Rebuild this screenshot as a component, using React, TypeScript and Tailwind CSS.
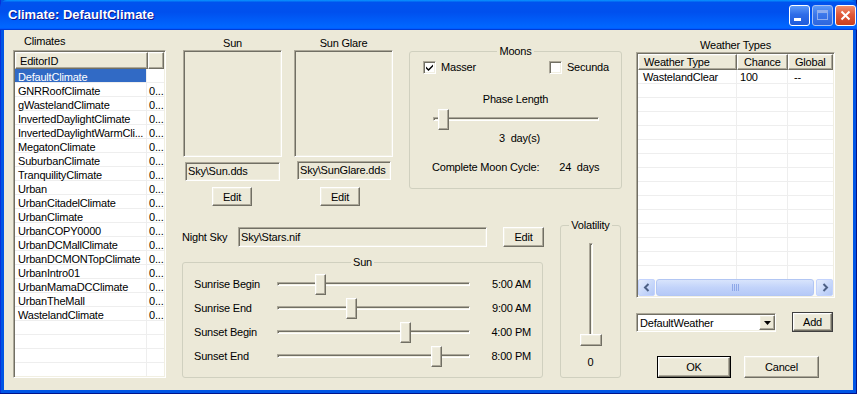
import React from "react";

const SUNKEN =
  "border border-t-[#ACA899] border-l-[#ACA899] border-r-white border-b-white shadow-[inset_1px_1px_0_#716F64,inset_-1px_-1px_0_#F1EFE2]";
const RAISED =
  "border border-t-white border-l-white border-r-[#716F64] border-b-[#716F64] shadow-[inset_-1px_-1px_0_#ACA899,inset_1px_1px_0_#F1EFE2]";

function Btn({ label, className }: { label: string; className: string }) {
  return (
    <div className={`${RAISED} bg-[#ECE9D8] flex items-center justify-center leading-[13px] ${className}`}>
      {label}
    </div>
  );
}

function DefBtn({ label, className }: { label: string; className: string }) {
  return (
    <div className={`border border-black flex ${className}`}>
      <div className={`${RAISED} bg-[#ECE9D8] flex-1 flex items-center justify-center leading-[13px]`}>{label}</div>
    </div>
  );
}

function Group({ title, className, children }: { title: string; className: string; children?: React.ReactNode }) {
  return (
    <div className={`relative border border-[#D0D0BF] rounded-[3px] ${className}`}>
      <div className="absolute -top-[7px] left-0 right-0 flex justify-center">
        <span className="bg-[#ECE9D8] px-[2px] leading-[13px]">{title}</span>
      </div>
      {children}
    </div>
  );
}

function HSlider({ className, thumb }: { className: string; thumb: number }) {
  return (
    <div className={`relative h-[21px] ${className}`}>
      <div className={`absolute left-0 right-0 top-[8px] h-[4px] bg-[#ECE9D8] ${SUNKEN}`} />
      <div className={`absolute top-0 w-[11px] h-[21px] bg-[#ECE9D8] ${RAISED}`} style={{ left: thumb }} />
    </div>
  );
}

function Check({ checked }: { checked: boolean }) {
  return (
    <div className={`w-[13px] h-[13px] bg-white ${SUNKEN} flex items-center justify-center`}>
      {checked && (
        <svg width="9" height="9" viewBox="0 0 9 9">
          <path d="M1 3.5 L3.5 6 L8 1.5 L8 3.5 L3.5 8 L1 5.5 Z" fill="#000" />
        </svg>
      )}
    </div>
  );
}

const climates: [string, string][] = [
  ["DefaultClimate", ""],
  ["GNRRoofClimate", "0..."],
  ["gWastelandClimate", "0..."],
  ["InvertedDaylightClimate", "0..."],
  ["InvertedDaylightWarmCli...", "0..."],
  ["MegatonClimate", "0..."],
  ["SuburbanClimate", "0..."],
  ["TranquilityClimate", "0..."],
  ["Urban", "0..."],
  ["UrbanCitadelClimate", "0..."],
  ["UrbanClimate", "0..."],
  ["UrbanCOPY0000", "0..."],
  ["UrbanDCMallClimate", "0..."],
  ["UrbanDCMONTopClimate", "0..."],
  ["UrbanIntro01", "0..."],
  ["UrbanMamaDCClimate", "0..."],
  ["UrbanTheMall", "0..."],
  ["WastelandClimate", "0..."],
];

function ClimatesColumn() {
  const rows = [...climates];
  while (rows.length < 23) rows.push(["", ""]);
  return (
    <div className="w-[153px] flex flex-col pt-[5px]">
      <div className="leading-[13px] pl-[11px]">Climates</div>
      <div className={`mt-[2px] h-[328px] bg-white p-px ${SUNKEN} flex flex-col overflow-hidden`}>
        <div className="flex h-[17px] shrink-0">
          <div className={`w-[133px] ${RAISED} bg-[#ECE9D8] pl-[4px] leading-[16px]`}>EditorID</div>
          <div className={`flex-1 ${RAISED} bg-[#ECE9D8]`} />
        </div>
        <div className="flex flex-col overflow-hidden">
          {rows.map(([name, v], i) => (
            <div key={i} className="flex h-[14px] shrink-0 border-b border-[#EEEEEE]">
              <div
                className={`w-[132px] pl-[3px] leading-[16px] whitespace-nowrap overflow-x-clip border-r border-[#EEEEEE] ${
                  i === 0 ? "bg-[#316AC5] text-white" : ""
                }`}
              >
                {name}
              </div>
              <div className="flex-1 pl-[2px] leading-[16px] whitespace-nowrap overflow-x-clip">{v}</div>
            </div>
          ))}
        </div>
      </div>
    </div>
  );
}

function ImageCol({ title, field, fieldClass, editClass }: { title: string; field: string; fieldClass: string; editClass: string }) {
  return (
    <div className="w-[99px] flex flex-col pt-[7px]">
      <div className="leading-[13px] text-center">{title}</div>
      <div className={`h-[107px] ${SUNKEN} bg-[#ECE9D8]`} />
      <div className={`h-[19px] ${SUNKEN} bg-[#ECE9D8] pl-[2px] leading-[17px] whitespace-nowrap ${fieldClass}`}>{field}</div>
      <Btn label="Edit" className={`w-[40px] h-[19px] pt-[1px] ${editClass}`} />
    </div>
  );
}

function Moons() {
  return (
    <Group title="Moons" className="w-[213px] h-[138px] mt-[21px] ml-[16px]">
      <div className="flex flex-col">
        <div className="flex items-center mt-[9px] pl-[13px] h-[13px]">
          <Check checked />
          <span className="ml-[5px] leading-[13px]">Masser</span>
          <div className="ml-[73px]">
            <Check checked={false} />
          </div>
          <span className="ml-[5px] leading-[13px]">Secunda</span>
        </div>
        <div className="mt-[19px] leading-[13px] text-center">Phase Length</div>
        <HSlider className="w-[166px] ml-[23px] mt-[3px]" thumb={5} />
        <div className="mt-[2px] leading-[13px] text-center pl-[8px]">3&nbsp; day(s)</div>
        <div className="mt-[16px] flex leading-[13px] pl-[22px]">
          <span>Complete Moon Cycle:</span>
          <span className="ml-[20px]">24&nbsp; days</span>
        </div>
      </div>
    </Group>
  );
}

const sunRows: [string, number, string][] = [
  ["Sunrise Begin", 38, "5:00 AM"],
  ["Sunrise End", 69, "9:00 AM"],
  ["Sunset Begin", 123, "4:00 PM"],
  ["Sunset End", 154, "8:00 PM"],
];

function SunGroup() {
  return (
    <Group title="Sun" className="w-[361px] h-[116px] mt-[15px]">
      <div className="flex flex-col pt-[9px] pl-[11px]">
        {sunRows.map(([label, t, val]) => (
          <div key={label} className="flex items-center h-[24px]">
            <div className="w-[83px] leading-[13px]">{label}</div>
            <HSlider className="w-[193px]" thumb={t} />
            <div className="w-[61px] text-right leading-[13px]">{val}</div>
          </div>
        ))}
      </div>
    </Group>
  );
}

function Volatility() {
  return (
    <Group title="Volatility" className="w-[61px] h-[153px] mt-[15px] ml-[16px]">
      <div className="flex flex-col items-center pt-[17px]">
        <div className="relative w-[22px] h-[103px]">
          <div className={`absolute left-[9px] top-0 w-[4px] h-[94px] bg-[#ECE9D8] ${SUNKEN}`} />
          <div className={`absolute left-0 top-[91px] w-[22px] h-[12px] bg-[#ECE9D8] ${RAISED}`} />
        </div>
        <div className="mt-[10px] leading-[13px]">0</div>
      </div>
    </Group>
  );
}

function MiddleColumn() {
  return (
    <div className="w-[440px] ml-[16px] flex flex-col">
      <div className="flex h-[180px] items-start">
        <div className="ml-[1px]">
          <ImageCol title="Sun" field="Sky\Sun.dds" fieldClass="mt-[5px] ml-[2px] w-[95px]" editClass="mt-[6px] ml-[29px]" />
        </div>
        <div className="ml-[12px]">
          <ImageCol title="Sun Glare" field="Sky\SunGlare.dds" fieldClass="mt-[4px] ml-[3px] w-[94px]" editClass="mt-[7px] ml-[26px]" />
        </div>
        <Moons />
      </div>
      <div className="flex items-start">
        <div className="w-[362px] flex flex-col">
          <div className="flex items-center mt-[17px] h-[20px]">
            <div className="w-[56px] leading-[13px] pt-[1px]">Night Sky</div>
            <div className={`w-[249px] h-[20px] ${SUNKEN} bg-[#ECE9D8] pl-[2px] leading-[18px]`}>Sky\Stars.nif</div>
            <Btn label="Edit" className="ml-[16px] w-[41px] h-[20px] pt-[1px]" />
          </div>
          <SunGroup />
        </div>
        <Volatility />
      </div>
    </div>
  );
}

function Chevron({ dir }: { dir: "l" | "r" }) {
  return (
    <svg width="8" height="9" viewBox="0 0 8 9">
      <path
        d={dir === "l" ? "M5.5 1 L2 4.5 L5.5 8" : "M2.5 1 L6 4.5 L2.5 8"}
        stroke="#4D6185"
        strokeWidth="2"
        fill="none"
      />
    </svg>
  );
}

function ScrollBtn({ dir }: { dir: "l" | "r" }) {
  return (
    <div className="w-[17px] h-[17px] rounded-[2px] border border-[#C3D3FD] bg-[linear-gradient(135deg,#E6EEFC,#C5D6FA_60%,#B4C8F6)] flex items-center justify-center">
      <Chevron dir={dir} />
    </div>
  );
}

function WeatherColumn() {
  const rows = Array.from({ length: 15 });
  return (
    <div className="w-[199px] ml-[14px] flex flex-col pt-[9px]">
      <div className="leading-[13px] text-center">Weather Types</div>
      <div className={`h-[246px] bg-white p-px ${SUNKEN} flex flex-col overflow-hidden`}>
        <div className="flex h-[16px] shrink-0 leading-[14px]">
          <div className={`w-[99px] ${RAISED} bg-[#ECE9D8] pl-[5px]`}>Weather Type</div>
          <div className={`w-[51px] ${RAISED} bg-[#ECE9D8] pl-[6px]`}>Chance</div>
          <div className={`flex-1 ${RAISED} bg-[#ECE9D8] pl-[6px]`}>Global</div>
        </div>
        <div className="flex-1 flex flex-col overflow-hidden">
          {rows.map((_, i) => (
            <div key={i} className="flex h-[14px] shrink-0 border-b border-[#EEEEEE] leading-[15px]">
              <div className="w-[99px] pl-[5px] border-r border-[#EEEEEE]">{i === 0 ? "WastelandClear" : ""}</div>
              <div className="w-[51px] pl-[3px] border-r border-[#EEEEEE]">{i === 0 ? "100" : ""}</div>
              <div className="flex-1 pl-[6px]">{i === 0 ? "--" : ""}</div>
            </div>
          ))}
        </div>
        <div className="h-[17px] shrink-0 flex bg-[#FBFBF8]">
          <ScrollBtn dir="l" />
          <div className="flex-1 flex px-[1px]">
            <div className="w-[158px] h-[17px] rounded-[3px] border border-[#B2C6F3] bg-[linear-gradient(180deg,#D8E4FC,#C2D3FA_50%,#B5C9F7)] flex items-center justify-center gap-[1px]">
              <div className="w-[1px] h-[7px] bg-[#8EA8E8]" />
              <div className="w-[1px] h-[7px] bg-[#8EA8E8]" />
              <div className="w-[1px] h-[7px] bg-[#8EA8E8]" />
              <div className="w-[1px] h-[7px] bg-[#8EA8E8]" />
            </div>
          </div>
          <ScrollBtn dir="r" />
        </div>
      </div>
      <div className="flex items-start mt-[15px]">
        <div className={`w-[140px] h-[19px] bg-white ${SUNKEN} flex items-center pl-[3px]`}>
          <span className="flex-1 leading-[13px] pt-[1px]">DefaultWeather</span>
          <div className={`w-[16px] h-[15px] ${RAISED} bg-[#ECE9D8] flex items-center justify-center`}>
            <svg width="7" height="4" viewBox="0 0 7 4">
              <path d="M0 0 H7 L3.5 4 Z" fill="#000" />
            </svg>
          </div>
        </div>
        <div className="ml-[16px] -mt-[1px] w-[41px] h-[20px] border border-[#404040] flex">
          <div className={`${RAISED} bg-[#ECE9D8] flex-1 flex items-center justify-center leading-[13px]`}>Add</div>
        </div>
      </div>
      <div className="flex mt-[24px] ml-[21px]">
        <DefBtn label="OK" className="w-[74px] h-[22px]" />
        <Btn label="Cancel" className="ml-[13px] w-[75px] h-[22px]" />
      </div>
    </div>
  );
}

function TitleBar() {
  return (
    <div className="h-[30px] flex items-center pl-[8px] pr-[1px] rounded-t-[7px] bg-[linear-gradient(180deg,#0997FF_0%,#0053EE_8%,#0050EE_40%,#0066FF_88%,#0066FF_93%,#005BFF_95%,#003DD7_96%,#003DD7_100%)]">
      <span className="text-white font-bold text-[13px] leading-[16px] tracking-normal [text-shadow:1px_1px_#0F1089]">
        Climate: DefaultClimate
      </span>
      <div className="ml-auto flex gap-[2px]">
        <div className="w-[21px] h-[21px] rounded-[3px] border border-white bg-[linear-gradient(180deg,#5C9AF8,#2E6CE8_45%,#1F5BDB)] relative">
          <div className="absolute left-[4px] top-[12px] w-[7px] h-[3px] bg-white" />
        </div>
        <div className="w-[21px] h-[21px] rounded-[3px] border border-[#A9C1F2] bg-[linear-gradient(180deg,#5C9AF8,#3C77EA_45%,#2E66DE)] flex items-center justify-center">
          <div className="w-[11px] h-[10px] border border-[#8FAEEF] border-t-[3px]" />
        </div>
        <div className="w-[21px] h-[21px] rounded-[3px] border border-white bg-[linear-gradient(180deg,#F0906E,#E0593A_45%,#C9401F)] flex items-center justify-center">
          <svg width="11" height="11" viewBox="0 0 11 11">
            <path d="M1.5 1.5 L9.5 9.5 M9.5 1.5 L1.5 9.5" stroke="#fff" strokeWidth="2" />
          </svg>
        </div>
      </div>
    </div>
  );
}

export default function App() {
  return (
    <div className="w-[857px] h-[394px] font-['Liberation_Sans',Arial,sans-serif] text-[11px] tracking-[-0.2px] text-black bg-[#0055E5] shadow-[inset_-1px_-1px_0_#00138C,inset_1px_0_0_#0831D9] flex flex-col">
      <TitleBar />
      <div className="mx-[4px] h-[360px] bg-[#ECE9D8] flex pl-[9px] overflow-hidden">
        <ClimatesColumn />
        <MiddleColumn />
        <WeatherColumn />
      </div>
    </div>
  );
}
